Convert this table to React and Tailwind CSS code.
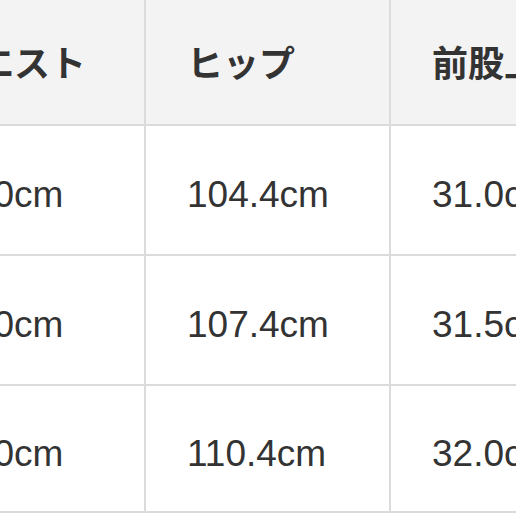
import React from 'react';

const headers = ['ウエスト', 'ヒップ', '前股上'];

const rows = [
  { h: 'h-[130px]', cells: ['76.0cm', '104.4cm', '31.0cm'] },
  { h: 'h-[130px]', cells: ['79.0cm', '107.4cm', '31.5cm'] },
  { h: 'h-[127px]', cells: ['82.0cm', '110.4cm', '32.0cm'] },
];

function Cell({ children, head, h }) {
  return (
    <div
      className={`w-[245px] shrink-0 ${h} flex items-center pl-[41px] border-r-2 border-b-2 border-[#dbdbdb] whitespace-nowrap overflow-hidden ${
        head ? 'bg-[#f3f3f3] font-bold text-[36px] pt-[3px]' : 'bg-white text-[37px] pt-[9px]'
      }`}
    >
      {children}
    </div>
  );
}

export default function App() {
  return (
    <div className="w-[516px] h-[516px] overflow-hidden bg-white text-[#333333] leading-none font-['Liberation_Sans','Noto_Sans_CJK_JP',sans-serif]">
      <div className="-ml-[99px] -mt-[5px] w-[1000px]">
        <div className="flex">
          {headers.map((t) => (
            <Cell key={t} head h="h-[131px]">
              <span className="font-['Noto_Sans_CJK_JP',sans-serif]">{t}</span>
            </Cell>
          ))}
        </div>
        {rows.map((r, i) => (
          <div key={i} className="flex">
            {r.cells.map((c, j) => (
              <Cell key={j} h={r.h}>
                {c}
              </Cell>
            ))}
          </div>
        ))}
      </div>
    </div>
  );
}
